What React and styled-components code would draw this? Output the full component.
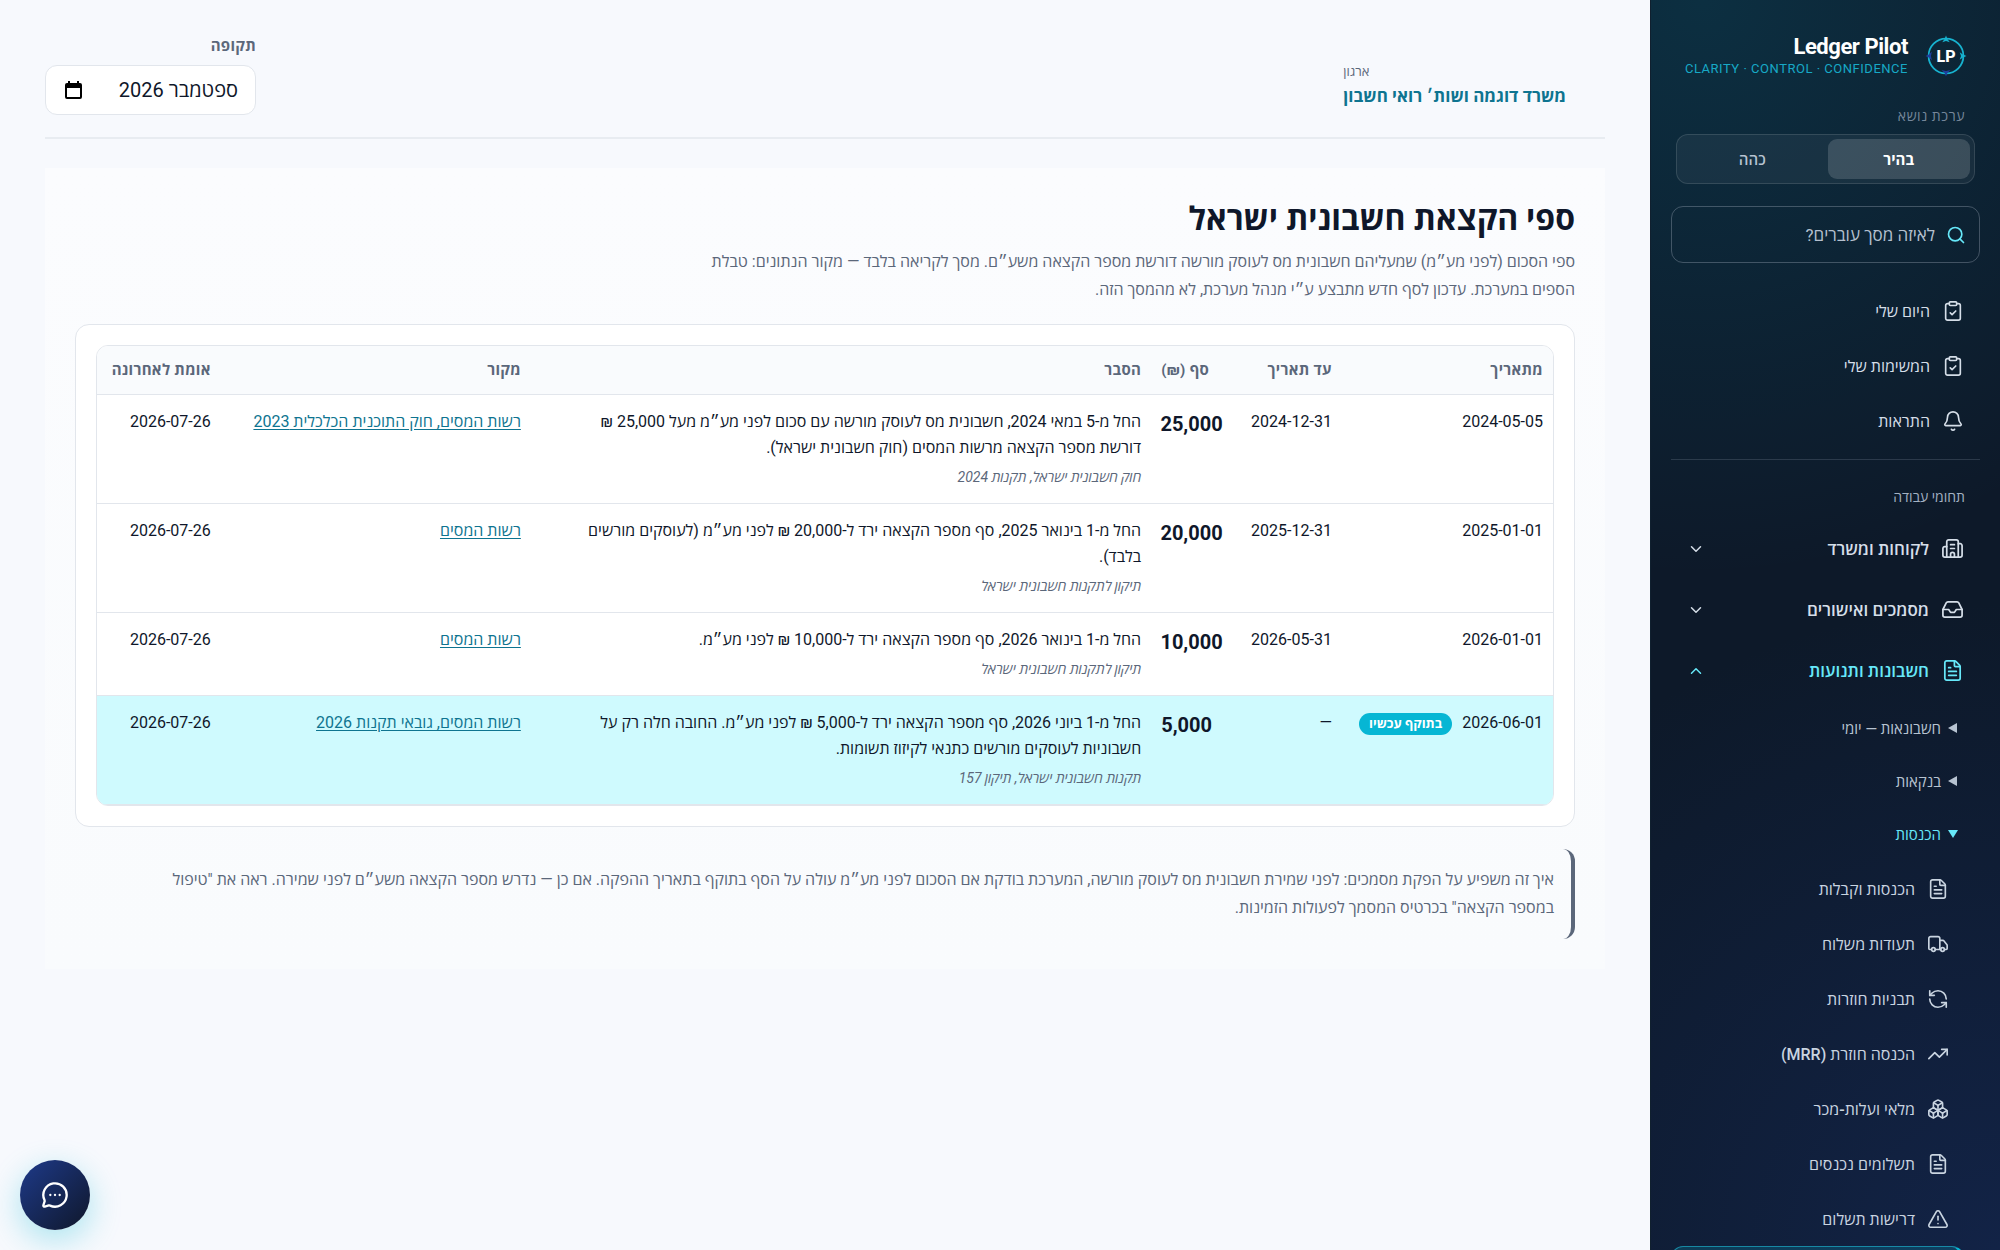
import React, { useState } from 'react';
import styled, { createGlobalStyle, css } from 'styled-components';
import {
  Bell,
  Boxes,
  Building2,
  ChevronDown,
  ChevronUp,
  ClipboardCheck,
  FileText,
  Inbox,
  MessageCircleMore,
  RefreshCcw,
  Search,
  TrendingUp,
  TriangleAlert,
  Truck,
} from 'lucide-react';

const GlobalStyle = createGlobalStyle`
  *, *::before, *::after {
    box-sizing: border-box;
  }

  body {
    margin: 0;
    background: #f7f9fd;
    color: #0f172a;
    direction: rtl;
    font-family: Roboto, "Open Sans", "Liberation Sans", sans-serif;
    font-size: 16px;
  }

  button, input {
    font: inherit;
    color: inherit;
  }
`;

const Shell = styled.div`
  display: flex;
  align-items: flex-start;
  min-height: 100vh;
`;

/* ---------- sidebar ---------- */

const Sidebar = styled.aside`
  position: sticky;
  top: 0;
  flex: 0 0 350px;
  height: 100vh;
  overflow: hidden;
  padding: 32px 20px 0;
  border-left: 1px solid #10202f;
  color: #dbe4ee;
  background:
    radial-gradient(circle at 15% 0%, rgba(6, 182, 212, 0.14), transparent 45%),
    radial-gradient(circle at 100% 100%, rgba(30, 58, 138, 0.3), transparent 50%),
    #0d1929;
`;

const Brand = styled.div`
  display: flex;
  align-items: center;
  gap: 16px;
  padding: 0 12px;
  height: 48px;

  .name {
    font-size: 22px;
    line-height: 26px;
    font-weight: 700;
    color: #fff;
    letter-spacing: -0.02em;
  }

  .tagline {
    font-size: 13px;
    line-height: 18px;
    letter-spacing: 0.04em;
    white-space: nowrap;
    color: #17a9c6;
  }
`;

const BrandText = styled.div`
  direction: ltr;
  text-align: right;
`;

const ThemeField = styled.fieldset`
  margin: 24px 5px 0;
  padding: 0;
  border: 0;
  min-width: 0;

  legend {
    padding: 0 10px;
    margin-bottom: 6px;
    font-size: 14px;
    line-height: 24px;
    font-weight: 500;
    letter-spacing: 0.04em;
    color: #75869a;
  }
`;

const Segmented = styled.div`
  display: grid;
  grid-template-columns: 1fr 1fr;
  gap: 4px;
  padding: 4px;
  border: 1px solid rgba(255, 255, 255, 0.12);
  border-radius: 12px;
  background: rgba(255, 255, 255, 0.05);
`;

const Segment = styled.button`
  height: 40px;
  border: 0;
  border-radius: 9px;
  cursor: pointer;
  font-size: 15px;
  font-weight: ${({ $active }) => ($active ? 700 : 600)};
  color: ${({ $active }) => ($active ? '#fff' : '#b7c3d1')};
  background: ${({ $active }) =>
    $active ? 'rgba(255, 255, 255, 0.15)' : 'transparent'};
`;

const SearchButton = styled.button`
  display: flex;
  align-items: center;
  gap: 11px;
  width: 100%;
  height: 57px;
  margin-top: 22px;
  padding: 0 13px;
  border: 1px solid rgba(203, 213, 225, 0.28);
  border-radius: 12px;
  background: transparent;
  color: #b4c0cf;
  font-size: 17px;
  cursor: pointer;

  svg {
    color: #67e8f9;
  }
`;

const NavList = styled.ul`
  list-style: none;
  margin: 0;
  padding: 0;
`;

const QuickNav = styled(NavList)`
  padding: 20px 0 11px;
  border-bottom: 1px solid rgba(148, 163, 184, 0.22);
`;

const NavLink = styled.a`
  display: flex;
  align-items: center;
  gap: 12px;
  height: 55px;
  padding: 0 16px;
  font-size: 16px;
  font-weight: 500;
  color: #d5dee8;
  text-decoration: none;
`;

const SectionLabel = styled.h2`
  margin: 24px 0 8px;
  padding: 0 15px;
  font-size: 14px;
  line-height: 26px;
  font-weight: 500;
  color: #a3b1c2;
`;

const GroupButton = styled.button`
  display: flex;
  align-items: center;
  gap: 12px;
  width: 100%;
  height: 61px;
  padding: 0 16px;
  border: 0;
  background: none;
  font-size: 17px;
  font-weight: 600;
  color: ${({ $open }) => ($open ? '#67e8f9' : '#d5dee8')};
  cursor: pointer;

  .chevron {
    margin-inline-start: auto;
  }
`;

const SubGroupButton = styled.button`
  display: flex;
  align-items: center;
  gap: 7px;
  width: 100%;
  height: 53px;
  padding: 0 22px;
  border: 0;
  background: none;
  font-size: 15px;
  font-weight: 500;
  color: ${({ $open }) => ($open ? '#67e8f9' : '#b7c3d1')};
  cursor: pointer;
`;

const IncomeList = styled(NavList)`
  padding-top: 1px;
`;

const LeafLink = styled(NavLink)`
  margin-inline-start: 16px;
  padding: 0 15px;
  color: #c9d4e0;

  ${({ $active }) =>
    $active &&
    css`
      border: 1px solid rgba(34, 211, 238, 0.5);
      border-inline-start: 4px solid #06b6d4;
      border-radius: 12px;
      background: rgba(6, 182, 212, 0.2);
      color: #fff;
    `}
`;

/* ---------- main ---------- */

const Main = styled.main`
  flex: 1;
  min-width: 0;
  padding: 34px 45px 60px;
`;

const TopBar = styled.header`
  display: flex;
  justify-content: space-between;
  align-items: flex-end;
  padding-bottom: 22px;
  border-bottom: 2px solid #e8ecf1;
`;

const Organisation = styled.div`
  padding: 0 39px 5px;
  text-align: left;

  .caption {
    font-size: 13px;
    line-height: 20px;
    font-weight: 500;
    color: #5b677a;
  }

  .name {
    font-size: 17px;
    line-height: 28px;
    font-weight: 700;
    color: #0e7490;
  }
`;

const PeriodField = styled.div`
  display: flex;
  flex-direction: column;
  gap: 7px;
  width: 211px;

  label {
    font-size: 15px;
    line-height: 24px;
    font-weight: 700;
    letter-spacing: 0.02em;
    color: #5b677a;
  }
`;

const MonthBox = styled.div`
  display: flex;
  align-items: center;
  height: 50px;
  padding: 0 17px 0 19px;
  border: 1px solid #e2e6ec;
  border-radius: 12px;
  background: #fff;

  input {
    flex: 1;
    min-width: 0;
    padding: 0;
    border: 0;
    outline: 0;
    background: none;
    font-size: 20px;
    line-height: 28px;
    color: #0f172a;
  }

  button {
    display: flex;
    padding: 0;
    border: 0;
    background: none;
    color: #000;
    cursor: pointer;
  }
`;

const Panel = styled.section`
  margin-top: 29px;
  padding: 30px;
  background: linear-gradient(180deg, #fbfcfe, #f9fbfd);
`;

const Title = styled.h1`
  margin: 0;
  font-size: 32px;
  line-height: 42px;
  font-weight: 700;
  color: #0f172a;
`;

const Lead = styled.p`
  max-width: 900px;
  margin: 8px 0 20px;
  font-size: 16px;
  line-height: 28px;
  color: #5b677a;
`;

const Card = styled.div`
  padding: 20px;
  border: 1px solid #e2e6ec;
  border-radius: 14px;
  background: #fff;
`;

const TableWrap = styled.div`
  overflow: hidden;
  border: 1px solid #e2e6ec;
  border-radius: 12px;
`;

const Table = styled.table`
  width: 100%;
  table-layout: fixed;
  border-collapse: collapse;
  font-size: 16px;
  line-height: 26px;

  .from { width: 14.5%; }
  .until { width: 7.5%; }
  .amount { width: 5.6%; }
  .source { width: 21.3%; }
  .verified { width: 8.5%; }

  th, td {
    padding: 14px 10px;
    text-align: start;
    vertical-align: top;
    border-bottom: 1px solid #e2e6ec;
  }

  th {
    padding: 11px 10px;
    font-size: 15px;
    font-weight: 700;
    letter-spacing: 0.02em;
    white-space: nowrap;
    color: #5b677a;
    background: #f9fbfd;
  }

  .amount-cell {
    text-align: end;
  }
`;

const Row = styled.tr`
  background: ${({ $current }) => ($current ? '#cffafe' : '#fff')};
`;

const Amount = styled.strong`
  font-size: 20px;
  line-height: 30px;
  font-weight: 700;
`;

const CurrentBadge = styled.span`
  display: inline-block;
  margin-inline-start: 10px;
  padding: 0 10px;
  border-radius: 12px;
  font-size: 13px;
  line-height: 22px;
  font-weight: 700;
  vertical-align: middle;
  white-space: nowrap;
  color: #fff;
  background: #06b6d4;
`;

const Explanation = styled.p`
  max-width: 576px;
  margin: 0;
`;

const LegalRef = styled.p`
  margin: 5px 0 0;
  font-size: 14px;
  line-height: 23px;
  font-style: italic;
  color: #5b677a;
`;

const SourceLink = styled.a`
  color: #0e7490;
  text-underline-offset: 2px;
`;

const Note = styled.aside`
  margin-top: 22px;
  padding: 17px 17px 17px 80px;
  border-inline-start: 4px solid #5b677a;
  border-radius: 12px;
  font-size: 16px;
  line-height: 28px;
  color: #5b677a;

  p {
    margin: 0;
  }
`;

const ChatButton = styled.button`
  position: fixed;
  left: 20px;
  bottom: 20px;
  display: flex;
  align-items: center;
  justify-content: center;
  width: 70px;
  height: 70px;
  padding: 0;
  border: 0;
  border-radius: 50%;
  color: #fff;
  background: linear-gradient(135deg, #1e3a8a, #0f172a);
  box-shadow: 0 10px 32px rgba(6, 182, 212, 0.32);
  cursor: pointer;
`;

/* ---------- drawings ---------- */

const LogoMark = () => (
  <svg width="44" height="44" viewBox="0 0 44 44" aria-hidden="true">
    <circle cx="22" cy="22" r="17.4" fill="none" stroke="#17b2cf" strokeWidth="1.8" />
    <path d="M22 1.5l1.4 3.6 2.4 3.2L22 7l-3.8 1.3 2.4-3.2z" fill="#17b2cf" />
    <path d="M42.5 22l-3.6 1.4-3.2 2.4L37 22l-1.3-3.8 3.2 2.4z" fill="#17b2cf" />
    <path d="M22 42.5l-1.4-3.4-3.2-3 4.6 1 4.6-1-3.2 3z" fill="#1e3f9e" />
    <path d="M1.5 22l3.4-1.4 3-3.2-1 4.6 1 4.6-3-3.2z" fill="#1e3f9e" />
    <text
      x="22"
      y="27.5"
      direction="ltr"
      textAnchor="middle"
      fontFamily="Roboto, sans-serif"
      fontSize="16"
      fontWeight="800"
      fill="#fff"
    >
      LP
    </text>
  </svg>
);

const CalendarGlyph = () => (
  <svg width="17" height="19" viewBox="0 0 17 19" aria-hidden="true">
    <path
      fill="currentColor"
      fillRule="evenodd"
      d="M3 0h2v2h7V0h2v2h1a2 2 0 0 1 2 2v12a2 2 0 0 1-2 2H2a2 2 0 0 1-2-2V4a2 2 0 0 1 2-2h1zM2 7v9h13V7z"
    />
  </svg>
);

const Marker = ({ open }) => (
  <svg width="10" height="10" viewBox="0 0 10 10" fill="currentColor" aria-hidden="true">
    {open ? <path d="M0 1h10L5 9z" /> : <path d="M9 0v10L0 5z" />}
  </svg>
);

/* ---------- data ---------- */

const quickLinks = [
  { label: 'היום שלי', Icon: ClipboardCheck },
  { label: 'המשימות שלי', Icon: ClipboardCheck },
  { label: 'התראות', Icon: Bell },
];

const groups = [
  { label: 'לקוחות ומשרד', Icon: Building2 },
  { label: 'מסמכים ואישורים', Icon: Inbox },
  { label: 'חשבונות ותנועות', Icon: FileText, open: true },
];

const subGroups = [
  { label: 'חשבונאות — יומי' },
  { label: 'בנקאות' },
  { label: 'הכנסות', open: true },
];

const incomeLinks = [
  { label: 'הכנסות וקבלות', Icon: FileText },
  { label: 'תעודות משלוח', Icon: Truck },
  { label: 'תבניות חוזרות', Icon: RefreshCcw },
  { label: 'הכנסה חוזרת (MRR)', Icon: TrendingUp },
  { label: 'מלאי ועלות-מכר', Icon: Boxes },
  { label: 'תשלומים נכנסים', Icon: FileText },
  { label: 'דרישות תשלום', Icon: TriangleAlert },
];

const thresholds = [
  {
    from: '2024-05-05',
    until: '2024-12-31',
    amount: '25,000',
    text: 'החל מ-5 במאי 2024, חשבונית מס לעוסק מורשה עם סכום לפני מע״מ מעל 25,000 ₪ דורשת מספר הקצאה מרשות המסים (חוק חשבונית ישראל).',
    legal: 'חוק חשבונית ישראל, תקנות 2024',
    source: 'רשות המסים, חוק התוכנית הכלכלית 2023',
    verified: '2026-07-26',
  },
  {
    from: '2025-01-01',
    until: '2025-12-31',
    amount: '20,000',
    text: 'החל מ-1 בינואר 2025, סף מספר הקצאה ירד ל-20,000 ₪ לפני מע״מ (לעוסקים מורשים בלבד).',
    legal: 'תיקון לתקנות חשבונית ישראל',
    source: 'רשות המסים',
    verified: '2026-07-26',
  },
  {
    from: '2026-01-01',
    until: '2026-05-31',
    amount: '10,000',
    text: 'החל מ-1 בינואר 2026, סף מספר הקצאה ירד ל-10,000 ₪ לפני מע״מ.',
    legal: 'תיקון לתקנות חשבונית ישראל',
    source: 'רשות המסים',
    verified: '2026-07-26',
  },
  {
    from: '2026-06-01',
    until: '—',
    amount: '5,000',
    text: 'החל מ-1 ביוני 2026, סף מספר הקצאה ירד ל-5,000 ₪ לפני מע״מ. החובה חלה רק על חשבוניות לעוסקים מורשים כתנאי לקיזוז תשומות.',
    legal: 'תקנות חשבונית ישראל, תיקון 157',
    source: 'רשות המסים, גובאי תקנות 2026',
    verified: '2026-07-26',
    current: true,
  },
];

const iconProps = { size: 22, strokeWidth: 1.8, 'aria-hidden': true };

const SideNav = () => {
  const [theme, setTheme] = useState('light');

  return (
    <Sidebar>
      <Brand>
        <LogoMark />
        <BrandText>
          <div className="name">Ledger Pilot</div>
          <div className="tagline">CLARITY · CONTROL · CONFIDENCE</div>
        </BrandText>
      </Brand>

      <ThemeField>
        <legend>ערכת נושא</legend>
        <Segmented>
          <Segment
            type="button"
            $active={theme === 'light'}
            aria-pressed={theme === 'light'}
            onClick={() => setTheme('light')}
          >
            בהיר
          </Segment>
          <Segment
            type="button"
            $active={theme === 'dark'}
            aria-pressed={theme === 'dark'}
            onClick={() => setTheme('dark')}
          >
            כהה
          </Segment>
        </Segmented>
      </ThemeField>

      <SearchButton type="button">
        <Search size={20} strokeWidth={2} aria-hidden="true" />
        <span>לאיזה מסך עוברים?</span>
      </SearchButton>

      <nav>
        <QuickNav>
          {quickLinks.map(({ label, Icon }) => (
            <li key={label}>
              <NavLink href="#">
                <Icon {...iconProps} />
                <span>{label}</span>
              </NavLink>
            </li>
          ))}
        </QuickNav>

        <SectionLabel>תחומי עבודה</SectionLabel>
        {groups.map(({ label, Icon, open }) => (
          <GroupButton key={label} type="button" $open={open} aria-expanded={!!open}>
            <Icon {...iconProps} size={23} />
            <span>{label}</span>
            {open ? (
              <ChevronUp className="chevron" size={18} aria-hidden="true" />
            ) : (
              <ChevronDown className="chevron" size={18} aria-hidden="true" />
            )}
          </GroupButton>
        ))}
        {subGroups.map(({ label, open }) => (
          <SubGroupButton key={label} type="button" $open={open} aria-expanded={!!open}>
            <Marker open={open} />
            <span>{label}</span>
          </SubGroupButton>
        ))}
        <IncomeList>
          {incomeLinks.map(({ label, Icon }) => (
            <li key={label}>
              <LeafLink href="#">
                <Icon {...iconProps} />
                <span>{label}</span>
              </LeafLink>
            </li>
          ))}
          <li>
            <LeafLink
              href="#"
              $active
              aria-current="page"
              aria-label="ספי הקצאת חשבונית ישראל"
            >
              <FileText {...iconProps} />
            </LeafLink>
          </li>
        </IncomeList>
      </nav>
    </Sidebar>
  );
};

const ThresholdTable = () => (
  <TableWrap>
    <Table>
      <colgroup>
        <col className="from" />
        <col className="until" />
        <col className="amount" />
        <col />
        <col className="source" />
        <col className="verified" />
      </colgroup>
      <thead>
        <tr>
          <th>מתאריך</th>
          <th>עד תאריך</th>
          <th className="amount-cell">סף (₪)</th>
          <th>הסבר</th>
          <th>מקור</th>
          <th>אומת לאחרונה</th>
        </tr>
      </thead>
      <tbody>
        {thresholds.map((row) => (
          <Row key={row.from} $current={row.current}>
            <td>
              <bdi>{row.from}</bdi>
              {row.current && <CurrentBadge>בתוקף עכשיו</CurrentBadge>}
            </td>
            <td>
              <bdi>{row.until}</bdi>
            </td>
            <td className="amount-cell">
              <Amount>{row.amount}</Amount>
            </td>
            <td>
              <Explanation>{row.text}</Explanation>
              <LegalRef>{row.legal}</LegalRef>
            </td>
            <td>
              <SourceLink href="#">{row.source}</SourceLink>
            </td>
            <td>
              <bdi>{row.verified}</bdi>
            </td>
          </Row>
        ))}
      </tbody>
    </Table>
  </TableWrap>
);

const App = () => {
  const [period, setPeriod] = useState('ספטמבר 2026');

  return (
    <>
      <GlobalStyle />
      <Shell>
        <SideNav />
        <Main>
          <TopBar>
            <Organisation>
              <div className="caption">ארגון</div>
              <div className="name">משרד דוגמה ושות׳ רואי חשבון</div>
            </Organisation>
            <PeriodField>
              <label htmlFor="period">תקופה</label>
              <MonthBox>
                <input
                  id="period"
                  type="text"
                  value={period}
                  onChange={(e) => setPeriod(e.target.value)}
                />
                <button type="button" aria-label="בחירת חודש">
                  <CalendarGlyph />
                </button>
              </MonthBox>
            </PeriodField>
          </TopBar>

          <Panel>
            <Title>ספי הקצאת חשבונית ישראל</Title>
            <Lead>
              ספי הסכום (לפני מע״מ) שמעליהם חשבונית מס לעוסק מורשה דורשת מספר הקצאה
              משע״ם. מסך לקריאה בלבד — מקור הנתונים: טבלת הספים במערכת. עדכון לסף חדש
              מתבצע ע״י מנהל מערכת, לא מהמסך הזה.
            </Lead>
            <Card>
              <ThresholdTable />
            </Card>
            <Note>
              <p>
                איך זה משפיע על הפקת מסמכים: לפני שמירת חשבונית מס לעוסק מורשה, המערכת
                בודקת אם הסכום לפני מע״מ עולה על הסף בתוקף בתאריך ההפקה. אם כן — נדרש
                מספר הקצאה משע״ם לפני שמירה. ראה את "טיפול במספר הקצאה" בכרטיס המסמך
                לפעולות הזמינות.
              </p>
            </Note>
          </Panel>
        </Main>
      </Shell>
      <ChatButton type="button" aria-label="צ׳אט">
        <MessageCircleMore size={28} strokeWidth={2} aria-hidden="true" />
      </ChatButton>
    </>
  );
};

export default App;
